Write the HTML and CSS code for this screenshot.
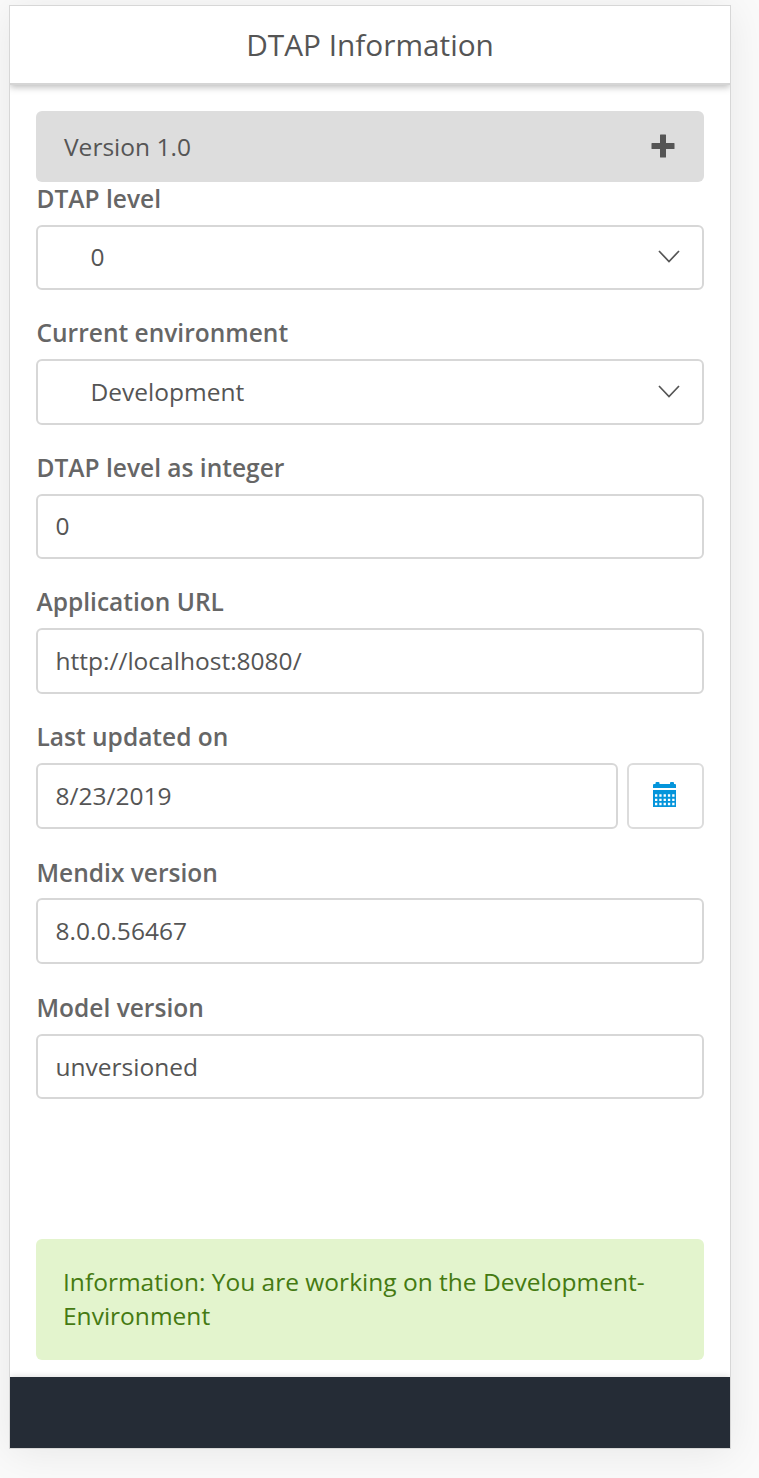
FILE: index.html
```html
<!DOCTYPE html>
<html lang="en">
<head>
<meta charset="utf-8">
<title>DTAP Information</title>
<link rel="stylesheet" href="styles.css">
</head>
<body>
<main class="phone">
  <header class="header"><h1 class="title">DTAP Information</h1></header>
  <div class="content">
    <div class="version"><span>Version 1.0</span>
      <svg class="plus" viewBox="0 0 24 24"><path d="M9.500 .5h5q.5 0 .5.500v8H23q.5 0 .5.500v5q0 .5-.5.500h-8V23q0 .5-.5.500h-5q-.5 0-.5-.5v-8H1q-.5 0-.5-.5v-5q0-.5.5-.5h8V1q0-.5.5-.5z"/></svg>
    </div>
    <div class="field field-short"><label class="label">DTAP level</label>
      <div class="input select input-short"><span>0</span><svg class="chevron" viewBox="0 0 22 13"><path d="M1 1l10 10.500L21 1"/></svg></div></div>
    <div class="field"><label class="label">Current environment</label>
      <div class="input select"><span>Development</span><svg class="chevron" viewBox="0 0 22 13"><path d="M1 1l10 10.500L21 1"/></svg></div></div>
    <div class="field field-short"><label class="label">DTAP level as integer</label><div class="input input-short">0</div></div>
    <div class="field"><label class="label">Application URL</label><div class="input">http://localhost:8080/</div></div>
    <div class="field field-date"><label class="label">Last updated on</label>
      <div class="date-row"><div class="input">8/23/2019</div>
        <button class="date-button" aria-label="Calendar"><svg class="calendar" viewBox="0 0 24 26"><path d="M1 2h1.500V1q0-1 1-1h2q1 0 1 1v1h10.500V1q0-1 1-1h2q1 0 1 1v1H22q1 0 1 1v3H0V3q0-1 1-1zM0 8h23V25H0z"/><path class="grid" d="M2 13.500h19.500M2 17.800h19.500M2 22h19.500"/></svg></button>
      </div></div>
    <div class="field field-tall"><label class="label">Mendix version</label><div class="input">8.0.0.56467</div></div>
    <div class="field"><label class="label">Model version</label><div class="input input-short input-last">unversioned</div></div>
    <div class="alert">Information: You are working on the Development-Environment</div>
  </div>
  <footer class="footer"></footer>
</main>
</body>
</html>
```
FILE: styles.css
```css
* { box-sizing: border-box; }
body { margin: 0; min-height: 1478px; padding: 5px 0 0 9px; background: #fafafa; color: #555; font: 24.530px/34px "Open Sans", sans-serif; }
.phone { display: flex; flex-direction: column; width: 722px; height: 1444px; background: #fff; border: 1px solid #d7d7d7; box-shadow: 0 4px 40px rgba(0,0,0,.08); }
.header { flex: none; height: 79px; display: flex; align-items: center; justify-content: center; border-bottom: 2px solid #d5d5d5; box-shadow: 0 2px 7px rgba(0,0,0,.28); clip-path: inset(0 0 -12px 0); }
.title { margin: 0; font-size: 29.800px; font-weight: 400; }
.content { flex: 1; padding: 26px 26px 0; }
.version { height: 71px; display: flex; align-items: center; justify-content: space-between; padding: 0 29px 0 28px; background: #ddd; border-radius: 6px; }
.plus { width: 24px; height: 24px; margin-bottom: 1px; fill: #555; }
.field { height: 135px; }
.field-short { height: 134px; }
.field-tall { height: 136px; }
.label { display: block; height: 43px; line-height: 33px; padding-left: .500px; font-weight: 600; color: #666; }
.field-tall .label { line-height: 35px; }
.input { height: 66px; padding: 0 17.500px; border: 2px solid #d7d7d7; border-radius: 6px; display: flex; align-items: center; }
.input-short { height: 65px; padding-bottom: 2px; }
.input-last { padding-bottom: 0; }
.select { justify-content: space-between; padding-left: 52.500px; padding-right: 22px; }
.chevron { width: 22px; height: 13px; margin-bottom: 1px; fill: none; stroke: #555; stroke-width: 1.700; }
.date-row { display: flex; gap: 9px; }
.date-row .input { flex: 1; }
.date-button { display: flex; align-items: center; justify-content: center; width: 77px; height: 66px; background: #fff; border: 2px solid #dcdcdc; border-radius: 6px; padding: 0 1px 2px 0; }
.calendar { width: 24px; height: 26px; fill: #0595db; }
.calendar .grid { fill: none; stroke: #fff; stroke-width: 2.300; stroke-dasharray: 2.300 2; }
.alert { height: 121px; margin-top: 113px; padding: 26px 27px; background: #e3f4cd; color: #457a12; border-radius: 6px; }
.footer { flex: none; height: 71px; background: #252c36; box-shadow: 0 -1px 6px rgba(0,0,0,.13); clip-path: inset(-12px 0 0 0); }
```
